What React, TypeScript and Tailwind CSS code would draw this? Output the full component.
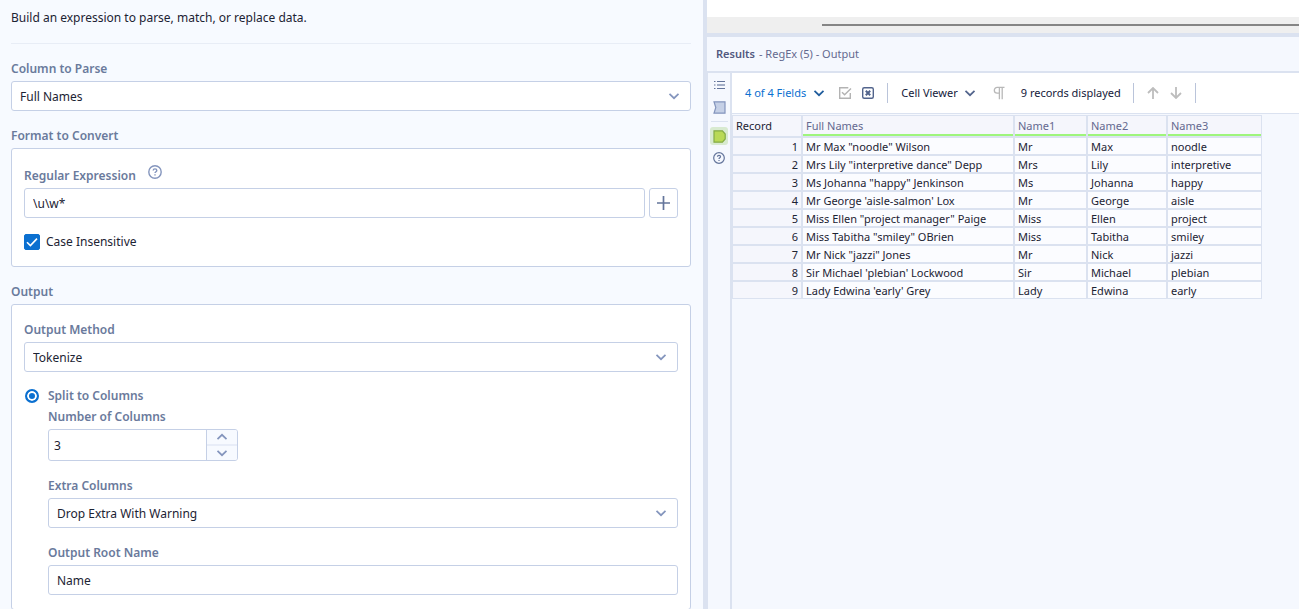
import { useState } from 'react'
import type { ReactNode } from 'react'

const people = [
  ['Mr Max "noodle" Wilson', 'Mr', 'Max', 'noodle'],
  ['Mrs Lily "interpretive dance" Depp', 'Mrs', 'Lily', 'interpretive'],
  ['Ms Johanna "happy" Jenkinson', 'Ms', 'Johanna', 'happy'],
  ["Mr George 'aisle-salmon' Lox", 'Mr', 'George', 'aisle'],
  ['Miss Ellen "project manager" Paige', 'Miss', 'Ellen', 'project'],
  ['Miss Tabitha "smiley" OBrien', 'Miss', 'Tabitha', 'smiley'],
  ['Mr Nick "jazzi" Jones', 'Mr', 'Nick', 'jazzi'],
  ["Sir Michael 'plebian' Lockwood", 'Sir', 'Michael', 'plebian'],
  ["Lady Edwina 'early' Grey", 'Lady', 'Edwina', 'early'],
]

const columns = ['Full Names', 'Name1', 'Name2', 'Name3']

function Chevron({ up = false, className = '' }: { up?: boolean; className?: string }) {
  return (
    <svg width="12" height="8" viewBox="0 0 12 8" fill="none" stroke="currentColor" className={className}>
      <path d={up ? 'M1.5 6.2 6 1.8l4.5 4.4' : 'M1.5 1.8 6 6.2l4.5-4.4'} strokeWidth="1.7" />
    </svg>
  )
}

function HelpIcon({ size }: { size: number }) {
  return (
    <svg width={size} height={size} viewBox="0 0 14 14" fill="none" stroke="currentColor" strokeWidth="1.4">
      <circle cx="7" cy="7" r="6.2" />
      <path d="M5.2 5.6c0-1 .8-1.7 1.8-1.7s1.8.7 1.8 1.6c0 1.2-1.8 1.3-1.8 2.6" />
      <path d="M7 9.2v1.3" />
    </svg>
  )
}

const labelClass = 'block h-5 pt-px text-xs leading-5 font-semibold text-[#6a7a9c]'
const fieldClass =
  'block h-[30px] w-full appearance-none rounded-[3px] border border-[#c5d0e6] bg-white px-2 pt-px text-xs text-[#1c2333] outline-none'

function Select({ id, label, value }: { id: string; label: string; value: string }) {
  return (
    <div className="flex flex-col gap-[3px]">
      <label htmlFor={id} className={labelClass}>
        {label}
      </label>
      <div className="relative">
        <select id={id} className={fieldClass}>
          <option>{value}</option>
        </select>
        <Chevron className="pointer-events-none absolute top-[11px] right-[11px] text-[#8495bd]" />
      </div>
    </div>
  )
}

function Group({ title, children }: { title: string; children: ReactNode }) {
  return (
    <section className="flex flex-col gap-[3px]">
      <h2 className={labelClass}>{title}</h2>
      <div className="rounded-[3px] border border-[#c5d0e6] bg-white px-3 py-3.5">{children}</div>
    </section>
  )
}

function ConfigPanel() {
  const [pattern, setPattern] = useState('\\u\\w*')
  const [ignoreCase, setIgnoreCase] = useState(true)
  const [count, setCount] = useState(3)
  const [rootName, setRootName] = useState('Name')

  return (
    <main className="flex min-w-0 flex-col gap-3.5 overflow-hidden bg-[#f7faff] pt-2 pr-3 pl-[11px] text-xs leading-5">
      <p className="border-b border-[#e8edf6] pb-[15px] text-[#1c2333]">
        Build an expression to parse, match, or replace data.
      </p>

      <Select id="column" label="Column to Parse" value="Full Names" />

      <Group title="Format to Convert">
        <div className="flex items-center gap-3 pt-0.5">
          <label htmlFor="pattern" className={labelClass}>
            Regular Expression
          </label>
          <button aria-label="Help" className="-mt-1.5 text-[#8495bd]">
            <HelpIcon size={14} />
          </button>
        </div>
        <div className="mt-[3px] flex gap-1">
          <input
            id="pattern"
            value={pattern}
            onChange={(e) => setPattern(e.target.value)}
            className={fieldClass}
          />
          <button
            aria-label="Add"
            className="flex h-[30px] w-[29px] shrink-0 items-center justify-center rounded-[3px] border border-[#c5d0e6] bg-white text-[#64759b]"
          >
            <svg width="13" height="14" viewBox="0 0 13 14" stroke="currentColor" strokeWidth="1.7">
              <path d="M6.5 0v14M0 7h13" />
            </svg>
          </button>
        </div>
        <label className="mt-3.5 flex w-fit items-center gap-1.5 text-[#1c2333]">
          <span className="relative size-4">
            <input
              type="checkbox"
              checked={ignoreCase}
              onChange={(e) => setIgnoreCase(e.target.checked)}
              className="block size-4 appearance-none rounded-[2px] border border-[#0b70d0] bg-white checked:bg-[#0b70d0]"
            />
            <svg viewBox="0 0 16 16" fill="none" className="pointer-events-none absolute inset-0">
              <path d="m3 8.2 3.4 3.3L13 4.6" stroke="#fff" strokeWidth="1.6" />
            </svg>
          </span>
          Case Insensitive
        </label>
      </Group>

      <Group title="Output">
        <div className="flex flex-col gap-3.5">
          <Select id="method" label="Output Method" value="Tokenize" />

          <div>
            <label className="flex h-5 w-fit items-center gap-[9px] pl-px font-semibold text-[#6a7a9c]">
              <input
                type="radio"
                name="split"
                defaultChecked
                className="size-3.5 appearance-none rounded-full border-2 border-[#0b70d0] bg-[#0b70d0] shadow-[inset_0_0_0_2px_#fff]"
              />
              Split to Columns
            </label>

            <div className="flex flex-col gap-3.5 pl-6">
              <div className="flex flex-col gap-[3px]">
                <label htmlFor="count" className={labelClass}>
                  Number of Columns
                </label>
                <div className="flex h-8 w-[190px] overflow-hidden rounded-[3px] border border-[#c5d0e6] bg-white">
                  <input
                    id="count"
                    value={count}
                    onChange={(e) => setCount(Number(e.target.value) || 0)}
                    className="min-w-0 flex-1 px-[5px] pt-px text-[#1c2333] outline-none"
                  />
                  <div className="flex w-[31px] flex-col divide-y-2 divide-[#e8edf8] border-l border-[#c5d0e6] bg-[#f7faff] text-[#8495bd]">
                    <button
                      aria-label="Increase"
                      onClick={() => setCount(count + 1)}
                      className="flex flex-1 items-center justify-center"
                    >
                      <Chevron up />
                    </button>
                    <button
                      aria-label="Decrease"
                      onClick={() => setCount(count - 1)}
                      className="flex flex-1 items-center justify-center"
                    >
                      <Chevron />
                    </button>
                  </div>
                </div>
              </div>

              <Select id="extra" label="Extra Columns" value="Drop Extra With Warning" />

              <div className="flex flex-col gap-[3px]">
                <label htmlFor="root-name" className={labelClass}>
                  Output Root Name
                </label>
                <input
                  id="root-name"
                  value={rootName}
                  onChange={(e) => setRootName(e.target.value)}
                  className={fieldClass}
                />
              </div>
            </div>
          </div>
        </div>
      </Group>
    </main>
  )
}

function SideRail() {
  return (
    <nav className="flex w-[25px] shrink-0 flex-col items-center border-r-2 border-l border-[#dbe2f0] pt-1 text-[#64759b]">
      <button aria-label="Messages" className="flex h-4 items-center">
        <svg width="11" height="10" viewBox="0 0 11 10" stroke="currentColor">
          <path d="M0 1.5h1.5M3 1.5h8M0 5h1.5M0 8.5h1.5M3 8.5h8" />
          <path d="M3 5h8" strokeWidth="1.6" opacity=".7" />
        </svg>
      </button>
      <button aria-label="Input" className="mt-1.5 flex h-4 items-center">
        <svg width="13" height="13" viewBox="0 0 13 13">
          <path d="M1 .8h11v11.4H1l1.8-5.7z" fill="#c5d0e6" stroke="#8495bd" strokeWidth="1.2" />
        </svg>
      </button>
      <div className="mt-1.5 h-px w-[17px] bg-[#dbe2f0]" />
      <button aria-label="Output" className="mt-[5px] flex size-[18px] items-center justify-center rounded-[3px] bg-[#d8ead0]">
        <svg width="13" height="13" viewBox="0 0 13 13">
          <path d="M1 .8h8.4l2.8 3.2v5L9.4 12.2H1z" fill="#b9d955" stroke="#84ab45" strokeWidth="1.2" />
        </svg>
      </button>
      <button aria-label="Help" className="mt-[7px]">
        <HelpIcon size={12} />
      </button>
    </nav>
  )
}

function Divider({ className = '' }: { className?: string }) {
  return <div className={`h-5 w-px bg-[#bac4da] ${className}`} />
}

function Toolbar() {
  return (
    <div className="flex h-[41px] shrink-0 items-center border-b border-[#dbe2f0] bg-white pl-[13px] text-[11px] whitespace-nowrap text-[#14193a]">
      <button className="flex items-center gap-[7px] text-[#0b70d0]">
        4 of 4 Fields
        <Chevron className="text-[#1f5c9c]" />
      </button>
      <button aria-label="Select all" className="ml-[13px] text-[#b3b3b3]">
        <svg width="14" height="14" viewBox="0 0 14 14" fill="none" stroke="currentColor" strokeWidth="1.4">
          <path d="M12.3 7v5.3H1.7V1.7h8.6" />
          <path d="m4 6.2 2.6 2.6L13 2.4" />
        </svg>
      </button>
      <button aria-label="Deselect all" className="ml-[9px] text-[#52648c]">
        <svg width="14" height="14" viewBox="0 0 14 14" fill="none" stroke="currentColor">
          <rect x="1.7" y="1.7" width="10.6" height="10.6" rx="1.5" strokeWidth="1.4" />
          <path d="m4.8 4.8 4.4 4.4m0-4.4L4.8 9.2" strokeWidth="2" />
        </svg>
      </button>
      <Divider className="ml-3" />
      <button className="ml-[13px] flex items-center gap-1.5">
        Cell Viewer
        <Chevron className="text-[#52648c]" />
      </button>
      <button aria-label="Show whitespace" className="ml-[17px] text-[#b8b8b8]">
        <svg width="12" height="14" viewBox="0 0 12 14" fill="none" stroke="currentColor" strokeWidth="1.3">
          <path d="M11.5 1.4H4.2a2.9 2.9 0 0 0 0 5.8h2M6.4 1.4v11.8M9.2 1.4v11.8" />
        </svg>
      </button>
      <span className="ml-4">9 records displayed</span>
      <Divider className="ml-3" />
      <button aria-label="Previous" className="ml-[13px] text-[#bdbdbd]">
        <svg width="12" height="12" viewBox="0 0 12 12" fill="none" stroke="currentColor" strokeWidth="1.8">
          <path d="M6 12V1M1 6l5-5 5 5" />
        </svg>
      </button>
      <button aria-label="Next" className="ml-[11px] text-[#bdbdbd]">
        <svg width="12" height="12" viewBox="0 0 12 12" fill="none" stroke="currentColor" strokeWidth="1.8">
          <path d="M6 0v11M1 6l5 5 5-5" />
        </svg>
      </button>
      <Divider className="ml-[13px]" />
    </div>
  )
}

function ResultsTable() {
  return (
    <table className="mt-px w-[530px] table-fixed border-separate border-spacing-0 border-t border-l border-[#dbe2f0] text-left text-[11px] leading-[15px] text-[#1c2333]">
      <colgroup>
        <col className="w-[70px]" />
        <col className="w-[212px]" />
        <col className="w-[73px]" />
        <col className="w-20" />
        <col />
      </colgroup>
      <thead>
        <tr className="h-[22px] bg-[#f5f6fc]">
          <th className="border-r-2 border-b-2 border-[#dbe2f0] px-[3px] py-0 leading-5 font-normal">
            Record
          </th>
          {columns.map((column) => (
            <th
              key={column}
              className="border-r-2 border-b-2 border-[#dbe2f0] p-0 font-normal text-[#64698f] last:border-r"
            >
              <div className="h-5 border-b-2 border-[#9ef57c] px-[3px] leading-5">{column}</div>
            </th>
          ))}
        </tr>
      </thead>
      <tbody>
        {people.map((row, i) => (
          <tr key={row[0]} className="group bg-[#fbfcff]">
            <td className="border-r-2 border-b-2 border-[#dbe2f0] bg-[#f5f6fc] px-[3px] pt-px pb-0 text-right group-last:border-b">
              {i + 1}
            </td>
            {row.map((cell, j) => (
              <td
                key={j}
                className="border-r-2 border-b-2 border-[#dbe2f0] px-[3px] pt-px pb-0 whitespace-nowrap group-last:border-b last:border-r"
              >
                {cell}
              </td>
            ))}
          </tr>
        ))}
      </tbody>
    </table>
  )
}

export default function App() {
  return (
    <div className="grid h-screen grid-cols-[703fr_596fr] overflow-hidden bg-[#f5f8fe] font-['Noto_Sans',sans-serif]">
      <ConfigPanel />

      <div className="flex min-w-0 flex-col border-l-4 border-[#dbe2f0]">
        {/* Bottom edge of the workflow canvas with its scrollbar */}
        <div className="h-[17px] shrink-0 bg-white" />
        <div className="h-4 shrink-0 bg-[#efefef] pt-[7px] pl-[115px]">
          <div className="h-0.5 bg-[#858585]" />
        </div>

        <header className="flex h-10 shrink-0 items-center gap-1 border-t-4 border-b-2 border-[#dbe2f0] pl-[9px] text-[11px] text-[#64698f]">
          <h1 className="font-semibold text-[#52597f]">Results</h1>
          <span>- RegEx (5) - Output</span>
        </header>

        <div className="flex min-h-0 flex-1">
          <SideRail />
          <div className="min-w-0 flex-1">
            <Toolbar />
            <ResultsTable />
          </div>
        </div>
      </div>
    </div>
  )
}
